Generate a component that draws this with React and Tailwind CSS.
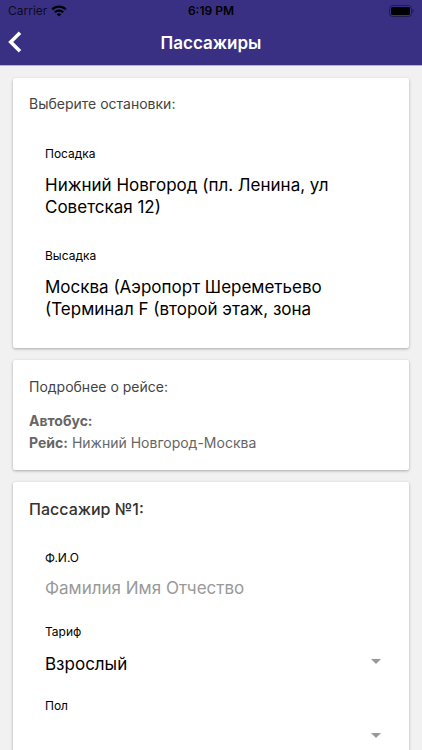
import {useState} from "react";

const stops = {
    from: 'Нижний Новгород (пл. Ленина, ул Советская 12)',
    to: 'Москва (Аэропорт Шереметьево (Терминал F (второй этаж, зона',
};

function Card({children, className = "pb-4"}) {
    return (
        <section className={`rounded-xs bg-white px-4 pt-4 shadow-[0_1px_3px_rgba(0,0,0,0.3)] ${className}`}>
            {children}
        </section>
    )
}

function StatusBar() {
    return (
        <div className="grid h-[22px] grid-cols-3 items-center px-2 text-xs text-black">
            <div className="flex items-center gap-1">
                <span className="text-black/80">Carrier</span>
                <svg viewBox="0 0 16 12" className="h-3 w-4" aria-hidden="true">
                    <path d="M1.3 4.4a9.5 9.5 0 0 1 13.4 0" fill="none" stroke="currentColor" strokeWidth="2.4"/>
                    <path d="M3.8 7.3a6 6 0 0 1 8.4 0" fill="none" stroke="currentColor" strokeWidth="2.2"/>
                    <path d="M8 11.6 5.7 9.3a3.3 3.3 0 0 1 4.6 0z" fill="currentColor"/>
                </svg>
            </div>
            <span className="text-center font-semibold">6:19 PM</span>
            <svg viewBox="0 0 25 12" className="h-3 w-[25px] justify-self-end" aria-hidden="true">
                <rect x="0.5" y="0.5" width="22" height="11" rx="3" fill="none" stroke="currentColor" opacity="0.4"/>
                <rect x="2" y="2" width="19" height="8" rx="1.5" fill="currentColor"/>
                <path d="M23.5 4v4c.8-.4 1.2-1.1 1.2-2s-.4-1.6-1.2-2z" fill="currentColor" opacity="0.5"/>
            </svg>
        </div>
    )
}

function SelectField({id, label, options}) {
    return (
        <div>
            <label htmlFor={id} className="block text-xs leading-4">{label}</label>
            <div className="mt-3 flex items-center">
                <select id={id} className="h-[22px] min-w-0 grow appearance-none text-[17px] outline-none">
                    {options.map((option) => (
                        <option key={option}>{option}</option>
                    ))}
                </select>
                <svg viewBox="0 0 10 9" className="pointer-events-none h-[9px] w-[10px] text-[#999999]" aria-hidden="true">
                    <path d="M0 0h10L5 5z" fill="currentColor"/>
                </svg>
            </div>
        </div>
    )
}

export default function App() {
    const [name, setName] = useState("");

    return (
        <div className="flex h-screen flex-col bg-[#f1f1f1] font-['Inter','Liberation_Sans',sans-serif] text-black">
            <header className="shrink-0 border-b border-[#b5b1d0] bg-[#3a3083]">
                <StatusBar/>
                <div className="grid h-[43px] grid-cols-[32px_1fr_32px] items-center">
                    <button type="button" aria-label="Назад" className="pb-1 pl-2 text-white">
                        <svg viewBox="0 0 14 22" className="h-[22px] w-[14px]" aria-hidden="true">
                            <path d="M12 1.7 2.7 11l9.3 9.3" fill="none" stroke="currentColor" strokeWidth="3.5"/>
                        </svg>
                    </button>
                    <h1 className="text-center text-[17px] font-semibold text-white">Пассажиры</h1>
                </div>
            </header>

            <main className="flex grow flex-col gap-3 overflow-y-auto px-[13px] py-3 [scrollbar-width:none]">
                <Card className="pb-7">
                    <h2 className="text-sm leading-5 text-[#444444]">Выберите остановки:</h2>
                    <dl className="px-4 pt-8">
                        <dt className="text-xs leading-4">Посадка</dt>
                        <dd className="pt-3 text-[17px] leading-[22px]">{stops.from}</dd>
                        <dt className="pt-[30px] text-xs leading-4">Высадка</dt>
                        <dd className="pt-3 text-[17px] leading-[22px]">{stops.to}</dd>
                    </dl>
                </Card>

                <Card>
                    <h2 className="text-sm leading-[22px] text-[#444444]">Подробнее о рейсе:</h2>
                    <div className="pt-3 text-sm leading-[22px] text-[#666666]">
                        <p><b>Автобус:</b></p>
                        <p><b>Рейс:</b> Нижний Новгород-Москва</p>
                    </div>
                </Card>

                <Card>
                    <h2 className="text-base leading-[22px] font-medium text-[#333333]">Пассажир №1:</h2>
                    <form className="flex flex-col gap-6 pt-[30px] pr-3 pl-4">
                        <div>
                            <label htmlFor="name" className="block text-xs leading-4">Ф.И.О</label>
                            <input
                                id="name"
                                value={name}
                                onChange={(e) => setName(e.target.value)}
                                placeholder="Фамилия Имя Отчество"
                                className="mt-3 block h-[22px] w-full text-[17px] outline-none placeholder:text-[#999999]"
                            />
                        </div>
                        <SelectField id="tariff" label="Тариф" options={['Взрослый', 'Детский']}/>
                        <SelectField id="gender" label="Пол" options={['', 'Мужской', 'Женский']}/>
                    </form>
                </Card>
            </main>
        </div>
    )
}
